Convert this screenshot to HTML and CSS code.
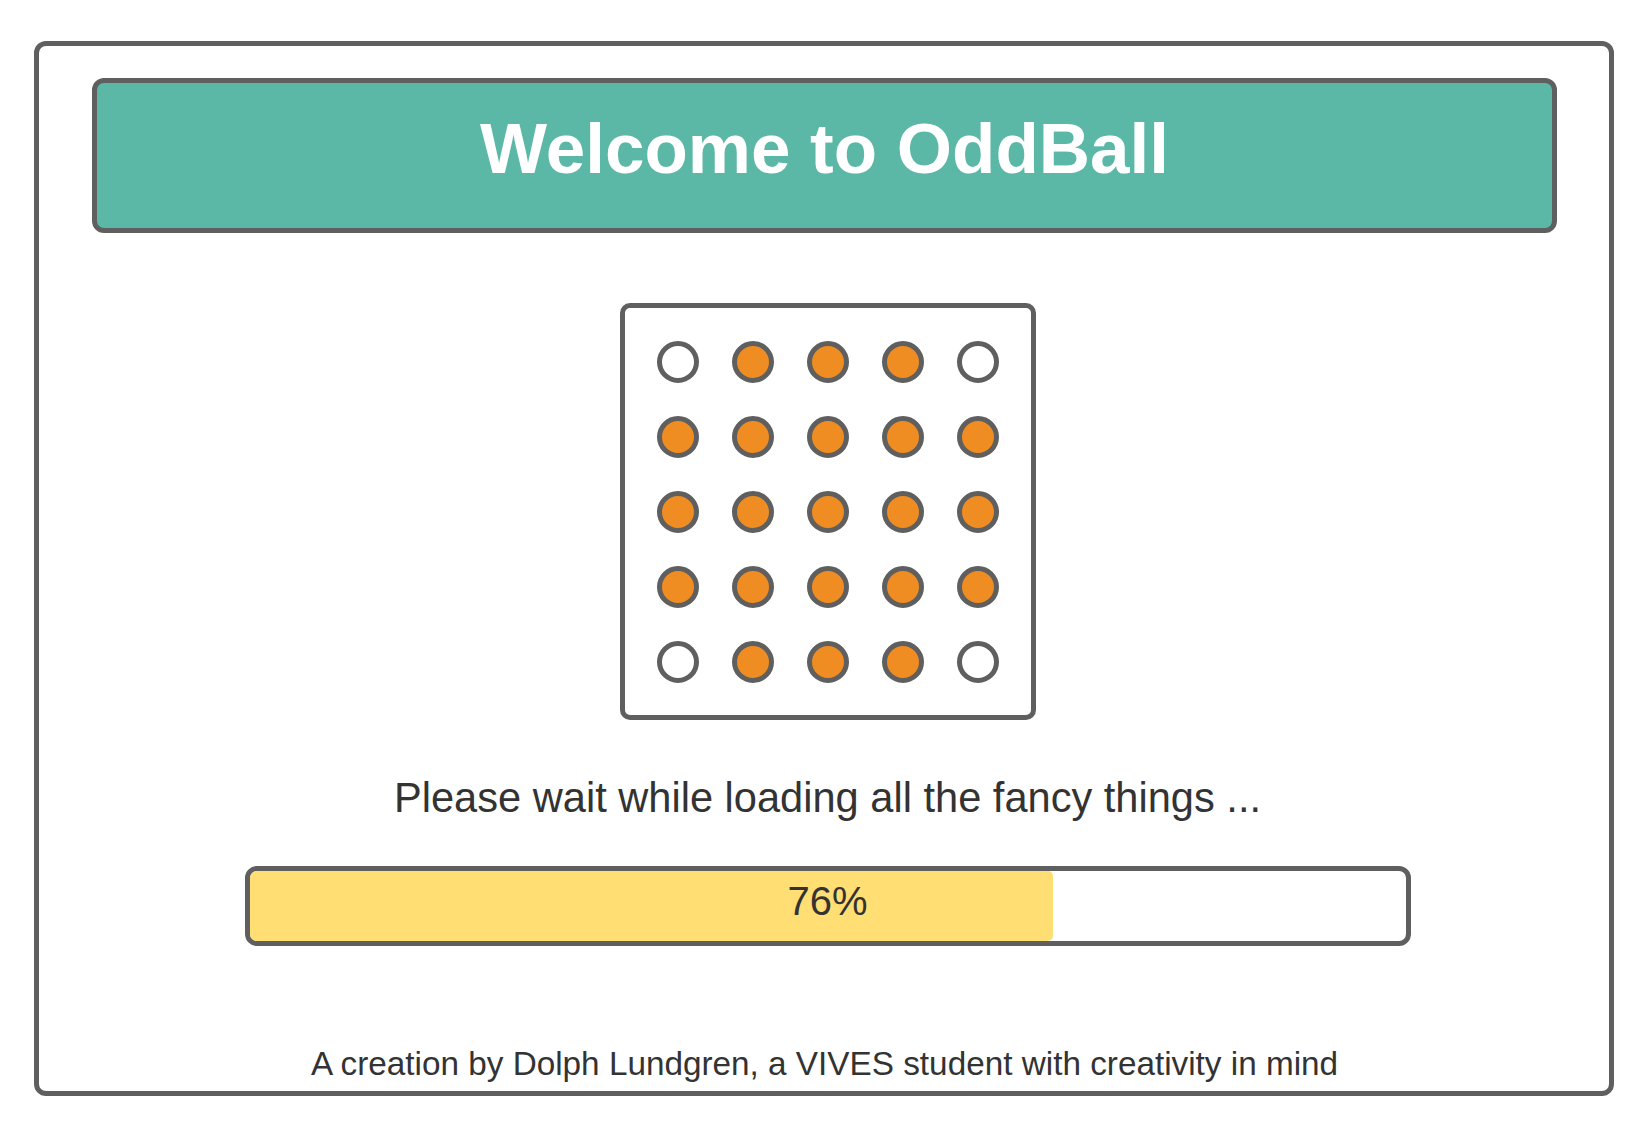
FILE: index.html
```html
<!DOCTYPE html>
<html lang="en">
<head>
<meta charset="utf-8">
<title>OddBall</title>
<link rel="stylesheet" href="styles.css">
</head>
<body>
<div class="frame">
  <header class="banner">
    <h1 class="banner-title">Welcome to OddBall</h1>
  </header>
  <main class="content">
    <div class="board">
      <span class="ball ball-empty"></span>
      <span class="ball"></span>
      <span class="ball"></span>
      <span class="ball"></span>
      <span class="ball ball-empty"></span>
      <span class="ball"></span>
      <span class="ball"></span>
      <span class="ball"></span>
      <span class="ball"></span>
      <span class="ball"></span>
      <span class="ball"></span>
      <span class="ball"></span>
      <span class="ball"></span>
      <span class="ball"></span>
      <span class="ball"></span>
      <span class="ball"></span>
      <span class="ball"></span>
      <span class="ball"></span>
      <span class="ball"></span>
      <span class="ball"></span>
      <span class="ball ball-empty"></span>
      <span class="ball"></span>
      <span class="ball"></span>
      <span class="ball"></span>
      <span class="ball ball-empty"></span>
    </div>
    <p class="loading-text">Please wait while loading all the fancy things ...</p>
    <div class="progress">
      <div class="progress-fill" style="width: 69.5%"></div>
      <span class="progress-label">76%</span>
    </div>
  </main>
  <footer class="credits">A creation by Dolph Lundgren, a VIVES student with creativity in mind</footer>
</div>
</body>
</html>
```

FILE: styles.css
```css
html, body {
  margin: 0;
  padding: 0;
  background: #ffffff;
}

body {
  font-family: "Liberation Sans", Arial, sans-serif;
  color: #333333;
}

.frame {
  box-sizing: border-box;
  margin: 41px 32px 0 34px;
  height: 1055px;
  border: 5px solid #5f5f5f;
  border-radius: 12px;
  padding: 32px 52px 0 53px;
  display: flex;
  flex-direction: column;
}

.banner {
  box-sizing: border-box;
  height: 155px;
  border: 5px solid #5f5f5f;
  border-radius: 12px;
  background: #5cb8a6;
  padding-top: 31px;
}

.banner-title {
  margin: 0;
  font-size: 71px;
  line-height: 70px;
  font-weight: bold;
  color: #ffffff;
  text-align: center;
}

.content {
  display: flex;
  flex-direction: column;
  align-items: center;
  padding-left: 6px;
}

.board {
  box-sizing: border-box;
  margin-top: 70px;
  width: 416px;
  height: 417px;
  border: 5px solid #5f5f5f;
  border-radius: 10px;
  padding: 33px 32px 32px 32px;
  display: grid;
  grid-template-columns: repeat(5, 42px);
  grid-auto-rows: 42px;
  column-gap: 33px;
  row-gap: 33px;
}

.ball {
  box-sizing: border-box;
  width: 42px;
  height: 42px;
  border: 5px solid #5f5f5f;
  border-radius: 50%;
  background: #ef8d22;
}

.ball-empty {
  background: #ffffff;
}

.loading-text {
  margin: 54px 0 0 0;
  font-size: 41.6px;
  line-height: 48px;
  color: #333333;
}

.progress {
  box-sizing: border-box;
  position: relative;
  margin-top: 44px;
  width: 1166px;
  height: 80px;
  border: 5px solid #5f5f5f;
  border-radius: 12px;
  overflow: hidden;
  background: #ffffff;
}

.progress-fill {
  height: 100%;
  background: #ffde74;
  border-radius: 0 5px 5px 0;
}

.progress-label {
  position: absolute;
  left: 0;
  right: 0;
  top: 0;
  text-align: center;
  font-size: 40px;
  line-height: 60px;
  color: #333333;
}

.credits {
  margin-top: auto;
  margin-bottom: 8px;
  font-size: 33.3px;
  line-height: 38px;
  text-align: center;
  color: #333333;
}
```
